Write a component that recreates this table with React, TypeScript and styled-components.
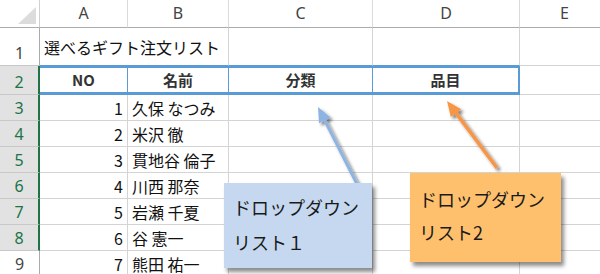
import React from "react";
import styled, { createGlobalStyle } from "styled-components";

const GRID = "#d4d4d4";
const TABLE_BLUE = "#5b9bd5";
const SELECT_GREEN = "#217346";
const JP_FONT = `"Noto Sans CJK JP", "Noto Sans", sans-serif`;

const GlobalStyle = createGlobalStyle`
  html, body {
    margin: 0;
    padding: 0;
    background: #fff;
    overflow: hidden;
  }
  body {
    font-family: ${JP_FONT};
  }
`;

const Sheet = styled.div`
  position: relative;
  display: grid;
  grid-template-columns: 40px 88px 101px 144px 147px 90px;
  grid-template-rows: 28px 38px 29px 26px 26px 26px 26px 26px 26px 26px;
  width: 630px;
  height: 274px;
  overflow: hidden;
`;

const Corner = styled.div`
  position: relative;
  box-sizing: border-box;
  border-right: 1px solid #d0d0d0;
  border-bottom: 1px solid #ababab;
  &::after {
    content: "";
    position: absolute;
    left: 18px;
    top: 7px;
    width: 18px;
    height: 17px;
    background: #dcdcdc;
    clip-path: polygon(100% 0, 100% 100%, 0 100%);
  }
`;

const ColHead = styled.div`
  box-sizing: border-box;
  display: flex;
  align-items: center;
  justify-content: center;
  border-right: 1px solid #dadada;
  border-bottom: 1px solid #ababab;
  font-family: "Noto Sans", "Open Sans", sans-serif;
  font-size: 16px;
  color: #444;
  padding-bottom: 1px;
`;

const RowHead = styled.div<{ $selected?: boolean }>`
  box-sizing: border-box;
  display: flex;
  align-items: flex-end;
  justify-content: center;
  padding-bottom: 1px;
  background: ${({ $selected }) => ($selected ? "#e2e2e2" : "#fff")};
  border-right: ${({ $selected }) =>
    $selected ? `2px solid ${SELECT_GREEN}` : "1px solid #ababab"};
  border-bottom: 1px solid #c8c8c8;
  font-family: "Noto Sans", "Open Sans", sans-serif;
  font-size: 16px;
  color: ${({ $selected }) => ($selected ? SELECT_GREEN : "#444")};
`;

const Cell = styled.div<{
  $align?: "left" | "center" | "right";
  $span?: number;
  $blueBottom?: boolean;
}>`
  box-sizing: border-box;
  display: flex;
  align-items: center;
  justify-content: ${({ $align }) =>
    $align === "right" ? "flex-end" : $align === "center" ? "center" : "flex-start"};
  grid-column: span ${({ $span }) => $span ?? 1};
  padding: 0 4px;
  border-right: 1px solid ${GRID};
  border-bottom: 1px solid ${({ $blueBottom }) => ($blueBottom ? TABLE_BLUE : GRID)};
  font-size: 16px;
  color: #111;
  white-space: nowrap;
`;

const HeadCell = styled.div<{ $last?: boolean }>`
  box-sizing: border-box;
  display: flex;
  align-items: center;
  justify-content: center;
  border-right: ${({ $last }) => ($last ? 2 : 1)}px solid ${TABLE_BLUE};
  border-bottom: 3px solid ${TABLE_BLUE};
  box-shadow: inset 0 2px 0 ${TABLE_BLUE};
  padding-top: 1px;
  font-size: 15px;
  font-weight: 700;
  color: #333;
`;

const Arrows = styled.svg`
  position: absolute;
  left: 0;
  top: 0;
  pointer-events: none;
`;

const Callout = styled.div<{
  $bg: string;
  $x: number;
  $y: number;
  $w: number;
  $h: number;
  $pt: number;
  $lh: number;
}>`
  position: absolute;
  left: ${({ $x }) => $x}px;
  top: ${({ $y }) => $y}px;
  width: ${({ $w }) => $w}px;
  height: ${({ $h }) => $h}px;
  box-sizing: border-box;
  padding: ${({ $pt }) => $pt}px 0 0 9px;
  background: ${({ $bg }) => $bg};
  box-shadow: 3px 4px 4px rgba(0, 0, 0, 0.45);
  font-size: 18px;
  line-height: ${({ $lh }) => $lh}px;
  color: #1a1a1a;
  white-space: nowrap;
`;

type Pt = [number, number];

// straight arrow with a filled triangular head at `tip`
const Arrow: React.FC<{ from: Pt; tip: Pt; color: string; width: number }> = ({
  from,
  tip,
  color,
  width,
}) => {
  const dx = tip[0] - from[0];
  const dy = tip[1] - from[1];
  const len = Math.hypot(dx, dy);
  const ux = dx / len;
  const uy = dy / len;
  const headLen = 15;
  const half = 6.5;
  const bx = tip[0] - ux * headLen;
  const by = tip[1] - uy * headLen;
  const head = [
    `${tip[0]},${tip[1]}`,
    `${bx - uy * half},${by + ux * half}`,
    `${bx + uy * half},${by - ux * half}`,
  ].join(" ");
  return (
    <g filter="url(#arrowShadow)">
      <line
        x1={from[0]}
        y1={from[1]}
        x2={bx + ux * 2}
        y2={by + uy * 2}
        stroke={color}
        strokeWidth={width}
      />
      <polygon points={head} fill={color} />
    </g>
  );
};

const columns = ["A", "B", "C", "D", "E"];

const people: [number, string][] = [
  [1, "久保 なつみ"],
  [2, "米沢 徹"],
  [3, "貫地谷 倫子"],
  [4, "川西 那奈"],
  [5, "岩瀬 千夏"],
  [6, "谷 憲一"],
  [7, "熊田 祐一"],
];

export default function App() {
  return (
    <>
      <GlobalStyle />
      <Sheet>
        <Corner />
        {columns.map((c) => (
          <ColHead key={c}>{c}</ColHead>
        ))}

        <RowHead>1</RowHead>
        <Cell $span={2} $blueBottom>
          選べるギフト注文リスト
        </Cell>
        <Cell $blueBottom />
        <Cell $blueBottom />
        <Cell />

        <RowHead $selected>2</RowHead>
        <HeadCell>NO</HeadCell>
        <HeadCell>名前</HeadCell>
        <HeadCell>分類</HeadCell>
        <HeadCell $last>品目</HeadCell>
        <Cell />

        {people.map(([no, name], i) => (
          <React.Fragment key={no}>
            <RowHead $selected={i < 6}>{i + 3}</RowHead>
            <Cell $align="right">{no}</Cell>
            <Cell>{name}</Cell>
            <Cell />
            <Cell />
            <Cell />
          </React.Fragment>
        ))}

        <Arrows width={630} height={274} viewBox="0 0 630 274">
          <defs>
            <filter id="arrowShadow" x="-30%" y="-30%" width="160%" height="160%">
              <feDropShadow dx="2.5" dy="2.5" stdDeviation="1.6" floodColor="#000" floodOpacity="0.5" />
            </filter>
          </defs>
          <Arrow from={[358, 186]} tip={[318, 107]} color="#8db4e2" width={3} />
          <Arrow from={[497, 168]} tip={[447, 101]} color="#f79646" width={3.5} />
        </Arrows>

        <Callout $bg="#c5d8ef" $x={224} $y={183} $w={148} $h={85} $pt={7} $lh={35}>
          ドロップダウン
          <br />
          リスト１
        </Callout>
        <Callout $bg="#fec06d" $x={410} $y={173} $w={151} $h={89} $pt={10} $lh={33}>
          ドロップダウン
          <br />
          リスト2
        </Callout>
      </Sheet>
    </>
  );
}
